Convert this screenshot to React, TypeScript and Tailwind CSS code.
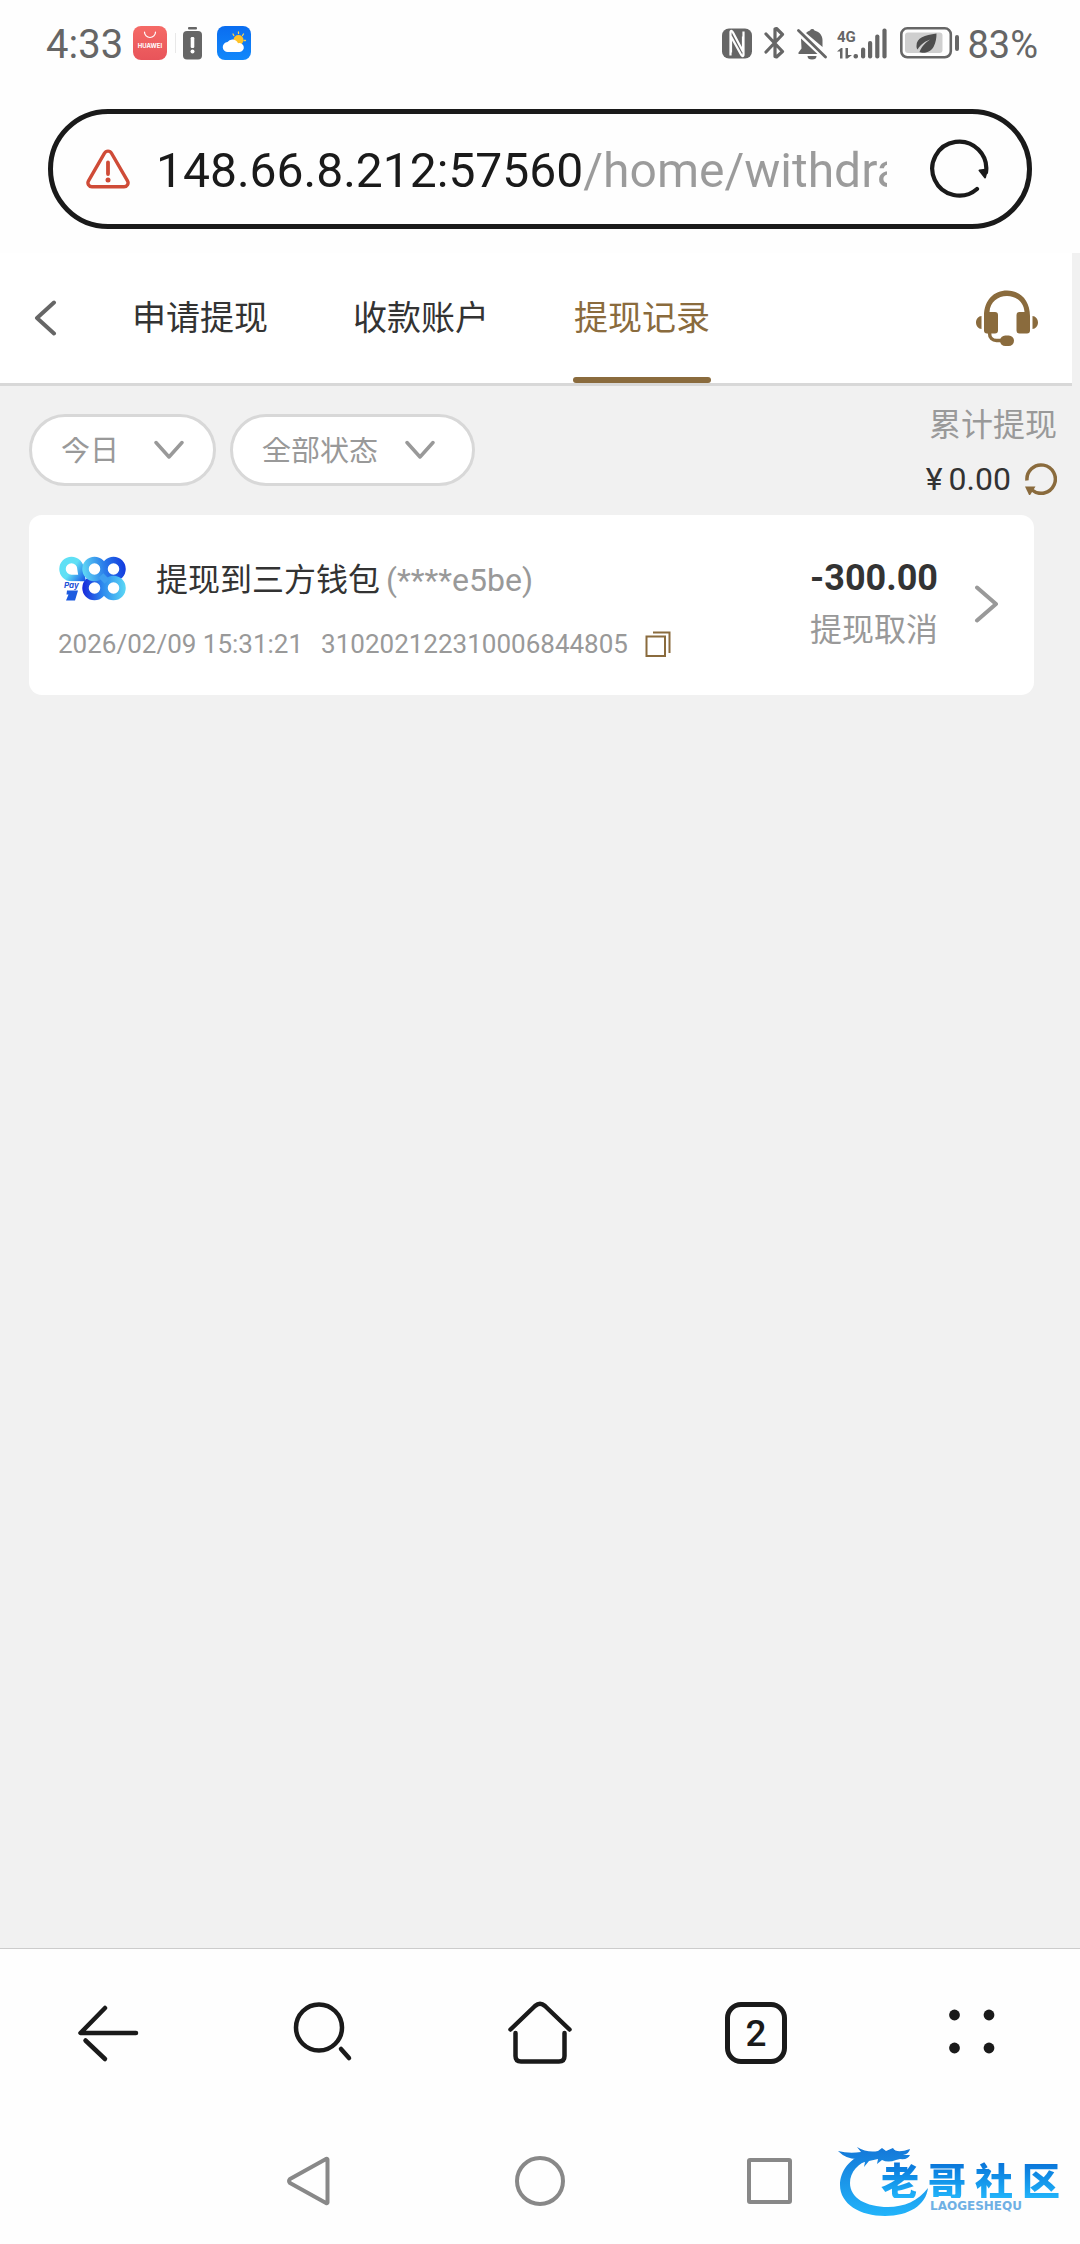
import React from 'react';

const GOLD = '#8a6b3d';

function StatusBar() {
  return (
    <div className="flex h-[86px] items-center justify-between pl-[46px] pr-[42px] leading-none text-[#666]">
      <div className="flex items-center">
        <time className="pt-1 text-[40px]">4:33</time>
        <svg className="ml-[10px] size-[34px]" viewBox="0 0 34 34" role="img" aria-label="AppGallery">
          <defs>
            <linearGradient id="gallery" x1="0" y1="0" x2="0" y2="1">
              <stop offset="0" stopColor="#f56a66" />
              <stop offset="1" stopColor="#e8545a" />
            </linearGradient>
          </defs>
          <rect width="34" height="34" rx="8" fill="url(#gallery)" />
          <path d="M11.5 6a5.500 5.500 0 0 0 11 0" fill="none" stroke="#fff" strokeWidth="1.200" strokeLinecap="round" />
          <text x="17" y="22" textAnchor="middle" fontFamily="Inter" fontWeight="700" fontSize="6" fill="#fff">HUAWEI</text>
        </svg>
        <div className="ml-2 h-5 w-px bg-[#e8e8e8]" />
        <svg className="ml-[7px] h-[33px] w-[19px]" viewBox="0 0 19 33" fill="#666">
          <rect x="5" width="9" height="2.400" rx="1" />
          <rect y="4" width="19" height="28.500" rx="4" />
          <rect x="7.700" y="10" width="3.600" height="11" rx="1.200" fill="#fff" />
          <circle cx="9.500" cy="24.500" r="2" fill="#fff" />
        </svg>
        <svg className="ml-[15px] size-[34px]" viewBox="0 0 34 34" role="img" aria-label="Weather">
          <defs>
            <linearGradient id="sky" x1="0" y1="0" x2="0" y2="1">
              <stop offset="0" stopColor="#0a6df0" />
              <stop offset="1" stopColor="#1188fb" />
            </linearGradient>
          </defs>
          <rect width="34" height="34" rx="8" fill="url(#sky)" />
          <g stroke="#ffd24a" strokeWidth="1.300" strokeLinecap="round">
            <path d="M16 8l.8 1.500M21.500 6v1.500M26.500 8l-1 1.500M28.500 14.500h-1.500" />
          </g>
          <circle cx="21.500" cy="14" r="5" fill="#ffc228" />
          <path d="M11 26a5 5 0 0 1-.5-10 6 6 0 0 1 10.500 1.200A4.500 4.500 0 1 1 22.500 26z" fill="#fff" />
        </svg>
      </div>
      <div className="flex items-center">
        <svg className="h-[31px] w-[30px]" viewBox="0 0 30 30" role="img" aria-label="NFC">
          <rect width="30" height="30" rx="7" fill="#666" />
          <path d="M8.500 27V3.500C8.500 2 10 2 11 4l10 19V8M21.500 3v23.500c0 1.500-1.500 1.500-2.500-.5L9 8v16" fill="none" stroke="#fff" strokeWidth="2.200" />
        </svg>
        <svg className="ml-3 h-[34px] w-[21px]" viewBox="0 0 21 34" fill="none" stroke="#666" strokeWidth="3.200" strokeLinejoin="round" strokeLinecap="round" role="img" aria-label="Bluetooth">
          <path d="M2 8l16.500 17.500L12.500 31 11 30.500V3l1.500-.5L18.500 8.500 2 26" />
        </svg>
        <svg className="ml-3 h-[33px] w-[30px]" viewBox="0 0 30 33" fill="#666" role="img" aria-label="Muted">
          <path d="M4 11.500L20.500 27H1.500v-1.500l3-4z" />
          <path d="M9 6a9 9 0 0 1 4-2.500 2.500 2.500 0 0 1 4.500 0C23 5 25.500 9 25.500 13v7z" />
          <path d="M10.500 29h9a4.500 3.500 0 0 1-9 0z" />
          <path d="M1.500 3.500L28.500 30" stroke="#666" strokeWidth="2.800" strokeLinecap="round" />
        </svg>
        <svg className="ml-[10px] h-[33px] w-[51px]" viewBox="0 0 51 33" fill="#666" role="img" aria-label="4G signal">
          <text x="0" y="15" fontFamily="Roboto" fontWeight="700" fontSize="15">4G</text>
          <path d="M0 24.500L4 21h1.500v10.500H3V24.500zM8.500 21H11v7h4L10.500 31.500h-2z" />
          <rect x="16.500" y="27" width="4.500" height="4.500" rx="2" />
          <rect x="24" y="20.500" width="4.200" height="11" rx="2" />
          <rect x="31" y="14" width="4.200" height="17.500" rx="2" />
          <rect x="38.200" y="7.500" width="4.200" height="24" rx="2" />
          <rect x="45.400" y="1.500" width="4.200" height="30" rx="2" />
        </svg>
        <svg className="ml-3 h-8 w-[60px]" viewBox="0 0 60 32" role="img" aria-label="Battery">
          <rect x="1.300" y="1.300" width="49.500" height="29" rx="6" fill="none" stroke="#666" strokeWidth="2.600" />
          <rect x="5" y="5.500" width="37.500" height="20.500" rx="3" fill="#cfcfcf" />
          <path d="M36.500 6.500c-12 2-20 4-20 12.500 0 1.500.3 2.500 1 3.500C21 17 26 14 30 12.500c-4 3-8 6-10.500 12.500 2 1 10 2 14-5 2.500-5 3-9 3-13.500z" fill="#4d4d4d" />
          <rect x="55" y="8" width="4" height="16" rx="2" fill="#666" />
        </svg>
        <span className="ml-[7px] pt-1 text-[38px]">83%</span>
      </div>
    </div>
  );
}

function AddressBar() {
  return (
    <div className="mx-12 mb-6 mt-[23px] flex h-[120px] items-center rounded-full border-[5px] border-[#1a1a1a] pl-[33px] pr-[38px]">
      <svg className="h-10 w-11 shrink-0" viewBox="0 0 44 40" fill="none" stroke="#cf4b37" role="img" aria-label="Not secure">
        <path d="M18.500 4.200a4 4 0 0 1 7 0l16 27.600a4 4 0 0 1-3.500 6H6a4 4 0 0 1-3.500-6z" strokeWidth="3.400" />
        <path d="M22 13.500l0 11.500" strokeWidth="3.800" strokeLinecap="round" />
        <circle cx="22" cy="31" r="2.500" fill="#cf4b37" stroke="none" />
      </svg>
      <input
        aria-label="Address"
        defaultValue="148.66.8.212:57560/home/withdraw"
        className="ml-[26px] h-[70px] min-w-0 flex-1 bg-[linear-gradient(90deg,#1a1a1a_426px,#9b9b9b_426px)] bg-clip-text pt-1 text-[48px] text-transparent outline-none"
      />
      <button aria-label="Reload" className="ml-[42px] shrink-0">
        <svg className="size-[60px]" viewBox="0 0 60 60" fill="none" stroke="#1a1a1a" strokeWidth="4.200" strokeLinecap="round">
          <path d="M57 33.500A27 27 0 1 0 48 50" />
          <path d="M50.500 31.500l7.500-1-2 8z" fill="#1a1a1a" strokeWidth="2" strokeLinejoin="round" />
        </svg>
      </button>
    </div>
  );
}

const tabs = ['申请提现', '收款账户', '提现记录'];

function PageHeader() {
  return (
    <header className="mr-2 flex h-[133px] items-stretch justify-between border-b-[3px] border-[#d8d8d8] bg-white pl-[34px] pr-[34px]">
      <div className="flex">
        <button aria-label="返回" className="flex items-center">
          <svg className="h-9 w-6" viewBox="0 0 24 36" fill="none" stroke="#666" strokeWidth="4" strokeLinecap="round" strokeLinejoin="round">
            <path d="M20 2.500L3 18l17 15.500" />
          </svg>
        </button>
        <nav className="ml-[73px] flex gap-[83px] pr-2 text-[34px]" role="tablist">
          {tabs.map((tab, i) => (
            <button
              key={tab}
              role="tab"
              aria-selected={i === 2}
              className={
                i === 2
                  ? 'relative w-[138px] text-[#8a6b3d] after:absolute after:inset-x-0 after:bottom-0 after:h-[6px] after:rounded-full after:bg-[#8a6b3d]'
                  : 'w-[138px] text-[#333]'
              }
            >
              {tab}
            </button>
          ))}
        </nav>
      </div>
      <button aria-label="客服">
        <svg className="h-[56px] w-[62px]" viewBox="0 0 62 56" fill={GOLD}>
          <path d="M8 26C8 10 18 0.500 31 0.500S54 10 54 26v14.500a3 3 0 0 1-3 3h-7.500a3 3 0 0 1-3-3V25a3 3 0 0 1 3-3h5C48 12 40 6 31 6s-17 6-17.500 16h5.500a3 3 0 0 1 3 3v15.500a3 3 0 0 1-3 3H11a3 3 0 0 1-3-3z" />
          <path d="M5.500 26v13C2.500 39 0 36 0 32.500S2.500 26 5.500 26zM56.500 26v13c3 0 5.500-3 5.500-6.500S59.500 26 56.500 26z" />
          <path d="M13.500 43c0 5 3 7.500 7 7.500h6" fill="none" stroke={GOLD} strokeWidth="3.500" />
          <rect x="24" y="45.500" width="14" height="10.500" rx="5.250" />
        </svg>
      </button>
    </header>
  );
}

function FilterSelect({ label, options, arrow }: { label: string; options: string[]; arrow: string }) {
  return (
    <label className="relative block">
      <select
        aria-label={label}
        className="field-sizing-content block h-[72px] appearance-none rounded-full border-[3px] border-[#d8d8d8] bg-white pl-[29px] pr-[94px] pt-[2px] text-[29px] leading-none text-[#999]"
      >
        {options.map((o) => (
          <option key={o}>{o}</option>
        ))}
      </select>
      <svg className={`pointer-events-none absolute top-[26px] h-5 w-[30px] ${arrow}`} viewBox="0 0 30 20" fill="none" stroke="#999" strokeWidth="3.500" strokeLinecap="round" strokeLinejoin="round">
        <path d="M2 2.500L15 17 28 2.500" />
      </svg>
    </label>
  );
}

function Summary() {
  return (
    <div className="flex flex-col items-end text-[32px] leading-[54px]">
      <span className="text-[#999]">累计提现</span>
      <div className="flex items-center text-[#333]">
        <span className="mr-[6px]">¥</span>
        <span>0.00</span>
        <button aria-label="刷新" className="ml-[14px]">
          <svg className="size-8" viewBox="0 0 32 32" fill="none" stroke={GOLD} strokeWidth="3.500">
            <path d="M2 17.500A14.200 14.200 0 1 1 7 27" />
            <path d="M0 23.500h10.500L4.500 33z" fill={GOLD} stroke="none" />
          </svg>
        </button>
      </div>
    </div>
  );
}

function WalletLogo() {
  return (
    <svg className="h-12 w-[70px]" viewBox="0 0 70 48" fill="none" strokeWidth="6.500" role="img" aria-label="988 Pay">
      <defs>
        <linearGradient id="nine" gradientUnits="userSpaceOnUse" x1="6" y1="8" x2="28" y2="24">
          <stop offset="0.350" stopColor="#5fe0f5" />
          <stop offset="1" stopColor="#1450e6" />
        </linearGradient>
        <linearGradient id="top8" gradientUnits="userSpaceOnUse" x1="24" y1="16" x2="68" y2="10">
          <stop offset="0" stopColor="#62dcf5" />
          <stop offset="0.500" stopColor="#2b7eea" />
          <stop offset="1" stopColor="#1238de" />
        </linearGradient>
        <linearGradient id="low8" gradientUnits="userSpaceOnUse" x1="26" y1="0" x2="68" y2="0">
          <stop offset="0" stopColor="#1a2fdc" />
          <stop offset="0.450" stopColor="#2e8bee" />
          <stop offset="1" stopColor="#5bd8f5" />
        </linearGradient>
      </defs>
      <circle cx="36.500" cy="32" r="9" stroke="url(#low8)" />
      <circle cx="55.500" cy="13" r="9" stroke="url(#top8)" />
      <circle cx="55.500" cy="32" r="9" stroke="url(#low8)" />
      <path d="M13.500 4a9 9 0 1 0 0 18H24l-1.500-9a9 9 0 0 0-9-9z" stroke="url(#nine)" />
      <circle cx="36.500" cy="13" r="9" stroke="url(#top8)" />
      <path d="M43 19.500q3 3 6 6" stroke="#3f9ff0" />
      <rect x="4" y="25.500" width="18" height="8" fill="#fff" />
      <text x="6" y="32" fontFamily="Inter" fontWeight="700" fontStyle="italic" fontSize="8" fill="#1b4fd6">Pay</text>
      <path d="M9 34.500h11L17 44.500H8l2.500-6H8.500z" fill="#1d5be0" />
    </svg>
  );
}

function RecordCard() {
  return (
    <article className="ml-[29px] mr-[46px] mt-[9px] flex items-start justify-between rounded-[13px] bg-white pb-[19px] pl-[29px] pr-[35px] pt-[33px]">
      <div>
        <div className="flex h-16 items-center text-[32px] text-[#333]">
          <WalletLogo />
          <h2 className="ml-7">提现到三方钱包</h2>
          <span className="ml-[6px] text-[#999]">(****e5be)</span>
        </div>
        <div className="flex h-16 items-center text-[26px] text-[#999]">
          <time>2026/02/09 15:31:21</time>
          <span className="ml-[18px]">310202122310006844805</span>
          <button aria-label="复制" className="ml-[17px]">
            <svg className="size-[26px]" viewBox="0 0 26 26" fill="none" stroke={GOLD} strokeWidth="2">
              <path d="M1.500 5.500h18.500V25H1.500zM8 1.500h16.500V22" />
            </svg>
          </button>
        </div>
      </div>
      <div className="mt-1 flex items-center">
        <div className="flex flex-col items-end leading-[52px]">
          <strong className="text-[36px] text-[#333]">-300.00</strong>
          <span className="text-[32px] text-[#999]">提现取消</span>
        </div>
        <button aria-label="详情" className="ml-9">
          <svg className="h-[38px] w-[25px]" viewBox="0 0 25 38" fill="none" stroke="#999" strokeWidth="4" strokeLinecap="round" strokeLinejoin="round">
            <path d="M3 2.500L22 19 3 35.500" />
          </svg>
        </button>
      </div>
    </article>
  );
}

function BrowserToolbar() {
  return (
    <nav className="flex h-[168px] items-center text-[#1a1a1a] *:flex *:flex-1 *:justify-center">
      <button aria-label="Back">
        <svg className="size-16" viewBox="0 0 64 64" fill="none" stroke="currentColor" strokeWidth="4.500" strokeLinecap="round">
          <path d="M29 7L4.500 32H60" strokeLinejoin="round" />
          <path d="M9.500 39.500L29 58" />
        </svg>
      </button>
      <button aria-label="Search">
        <svg className="size-16" viewBox="0 0 64 64" fill="none" stroke="currentColor" strokeWidth="4.500" strokeLinecap="round">
          <circle cx="27" cy="26.500" r="23" />
          <path d="M49 48L57 57" />
        </svg>
      </button>
      <button aria-label="Home">
        <svg className="size-16" viewBox="0 0 64 64" fill="none" stroke="currentColor" strokeWidth="4.500" strokeLinecap="round" strokeLinejoin="round">
          <path d="M2.500 28.500L27 5q5-4.500 10 0L61.500 28.500" />
          <path d="M7.500 32v23q0 5.500 5.500 5.500h38q5.500 0 5.500-5.500V32" />
        </svg>
      </button>
      <button aria-label="Tabs">
        <span className="flex size-[62px] items-center justify-center rounded-[16px] border-[5px] border-[#1a1a1a] text-[37px] font-medium leading-none">2</span>
      </button>
      <button aria-label="Menu">
        <svg className="size-16" viewBox="0 0 64 64" fill="currentColor">
          <circle cx="14.500" cy="14" r="5.400" />
          <circle cx="49" cy="14" r="5.400" />
          <circle cx="14.500" cy="47" r="5.400" />
          <circle cx="49" cy="47" r="5.400" />
        </svg>
      </button>
    </nav>
  );
}

function SystemNav() {
  return (
    <nav className="flex h-[127px] items-center justify-center gap-[180px]">
      <button aria-label="System back">
        <svg className="size-[50px]" viewBox="0 0 50 50" fill="none" stroke="#888" strokeWidth="4" strokeLinejoin="round">
          <path d="M42.500 3.500v43q0 1-1.500.5L5 27q-2-2 0-4L41 3q1.500-.5 1.500.5z" />
        </svg>
      </button>
      <button aria-label="System home">
        <svg className="size-[50px]" viewBox="0 0 50 50" fill="none" stroke="#888" strokeWidth="4">
          <circle cx="25" cy="25" r="23" />
        </svg>
      </button>
      <button aria-label="Recent apps">
        <svg className="size-[50px]" viewBox="0 0 50 50" fill="none" stroke="#888" strokeWidth="4" strokeLinejoin="round">
          <rect x="4" y="4" width="41" height="42" rx="1" />
        </svg>
      </button>
    </nav>
  );
}

function CommunityMark() {
  return (
    <div className="absolute bottom-[24px] right-[18px] h-[76px] w-[224px]">
      <svg className="absolute left-0 top-0 h-[76px] w-[110px]" viewBox="0 0 110 76">
        <defs>
          <linearGradient id="dragon" gradientUnits="userSpaceOnUse" x1="0" y1="4" x2="0" y2="72">
            <stop offset="0" stopColor="#1478d8" />
            <stop offset="1" stopColor="#22b4fa" />
          </linearGradient>
        </defs>
        <g fill="url(#dragon)">
          <path d="M30 9C12 13 2 27 2 41c0 19 20 31 45 31 24 0 41-11 43-28-10 13-24 19-40 19-22 0-38-9-38-24 0-11 8-20 22-25z" />
          <path d="M0 7q11 3 23 1l-4-5q10 6 21 4l4-3 4 3 7-3q3 6 17 1-1 5-7 6h7q-2 5-10 4l-4 1q-8 3-14 0l-5 4 1-5-9 2-5 6 1-5-8 2 2-5q-12 1-21-8z" />
        </g>
      </svg>
      <div className="absolute left-[43px] top-[16px] flex gap-[9px] bg-linear-to-b from-[#0a6fd6] to-[#22b4fa] bg-clip-text font-['Noto_Sans_CJK_SC'] text-[38px] font-black leading-[38px] text-transparent">
        <span>老</span>
        <span>哥</span>
        <span>社</span>
        <span>区</span>
      </div>
      <div className="absolute left-[92px] top-[56px] font-['DejaVu_Sans'] text-[12px] font-bold leading-[12px] text-[#6fb0e4]">LAOGESHEQU</div>
    </div>
  );
}

export default function App() {
  return (
    <div className="flex min-h-screen flex-col bg-[#fefefe] font-[Roboto,'Noto_Sans_CJK_SC',sans-serif]">
      <StatusBar />
      <AddressBar />
      <main className="flex-1 bg-[#f1f1f1]">
        <PageHeader />
        <div className="flex items-start justify-between pl-[29px] pr-[23px] pt-3">
          <div className="mt-4 flex gap-[14px]">
            <FilterSelect label="日期" options={['今日', '昨日', '近七日']} arrow="right-8" />
            <FilterSelect label="状态" options={['全部状态', '提现成功', '提现取消']} arrow="right-10" />
          </div>
          <Summary />
        </div>
        <RecordCard />
      </main>
      <footer className="relative border-t border-[#ccc] bg-[#fefefe]">
        <BrowserToolbar />
        <SystemNav />
        <CommunityMark />
      </footer>
    </div>
  );
}
